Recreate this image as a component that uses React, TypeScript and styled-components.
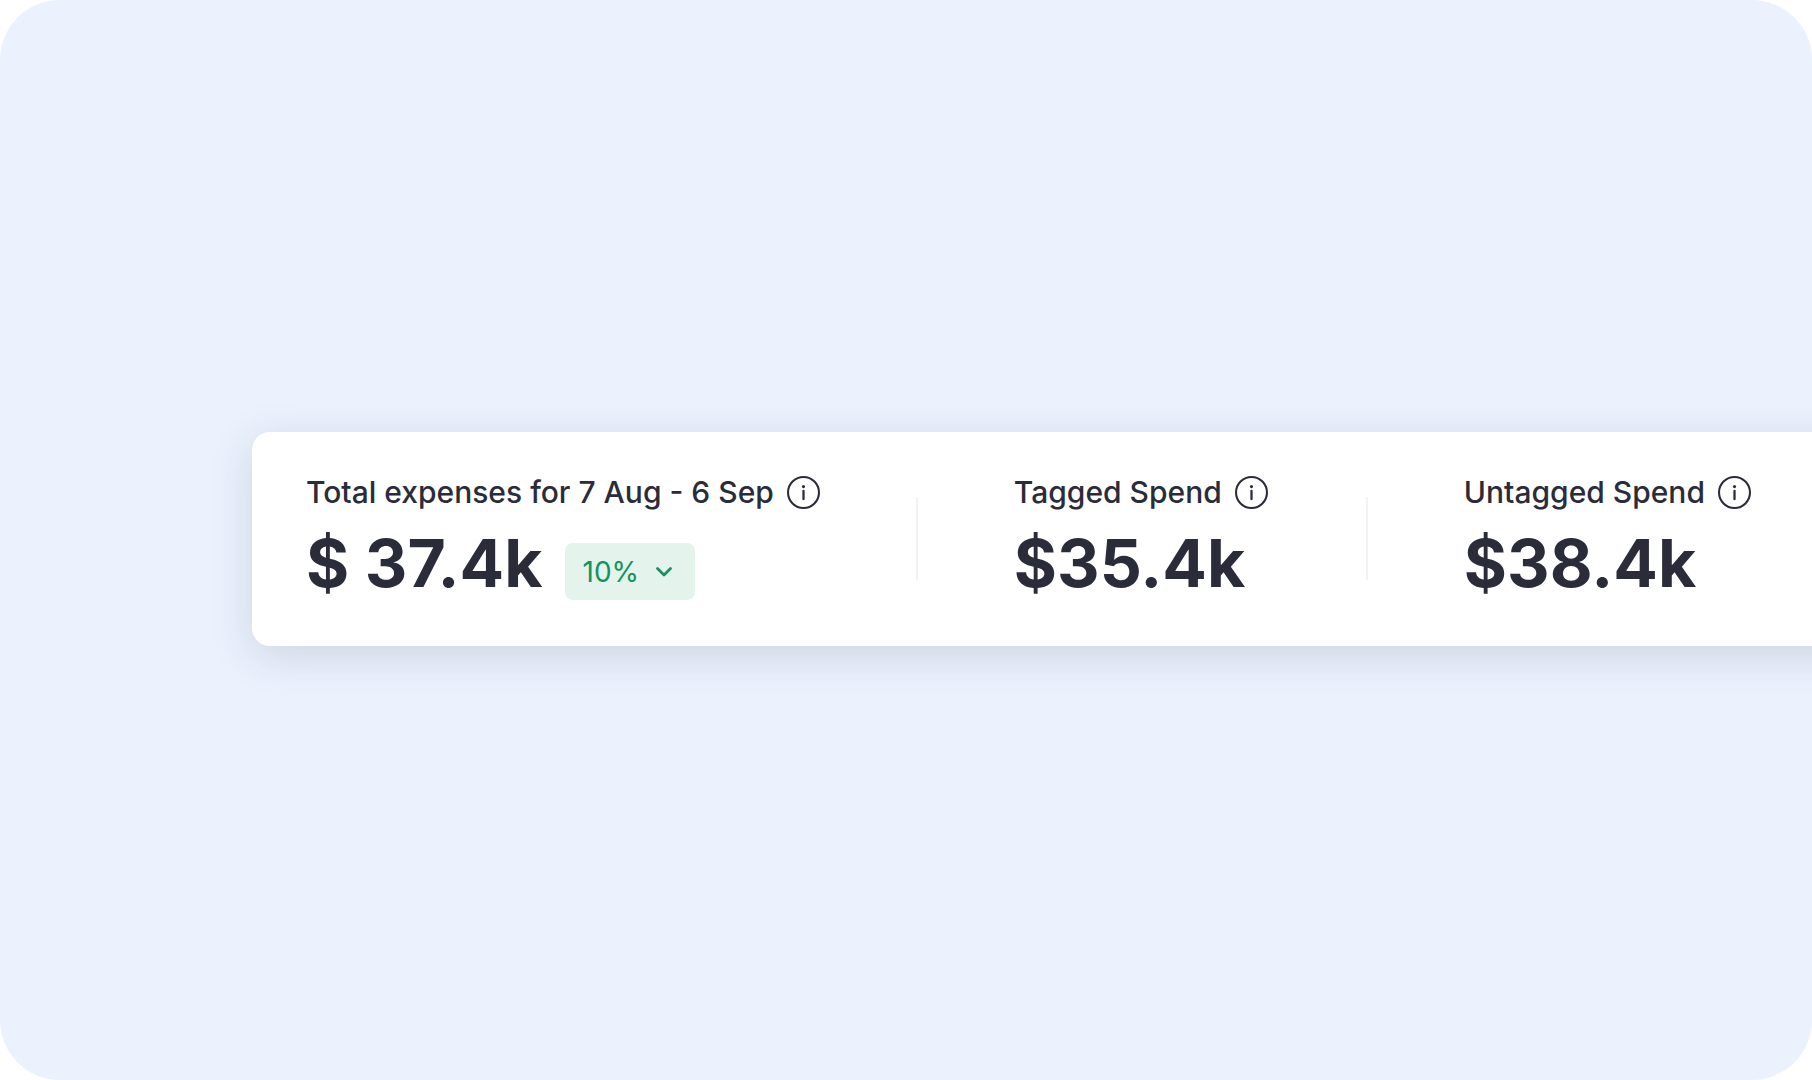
import React from "react";
import styled, { createGlobalStyle } from "styled-components";

const GlobalStyle = createGlobalStyle`
  *, *::before, *::after { box-sizing: border-box; }
  body {
    margin: 0;
    background: #ffffff;
    color: #2b2c3a;
    font-family: Inter, "Liberation Sans", sans-serif;
  }
`;

const Stage = styled.main`
  display: flex;
  align-items: center;
  min-height: 100vh;
  padding: 0 0 2px 252px;
  overflow: hidden;
  border-radius: 60px;
  background: #ebf2fe;
`;

const SummaryCard = styled.section`
  display: flex;
  flex: 1 0 auto;
  gap: 96px;
  margin-right: -80px;
  padding: 40px 54px 46px;
  border-radius: 18px;
  background: #ffffff;
  box-shadow: 0 10px 44px rgba(43, 44, 62, 0.15);
`;

const Metric = styled.div<{ $minWidth: number }>`
  display: flex;
  flex-direction: column;
  gap: 14px;
  min-width: ${({ $minWidth }) => $minWidth}px;
  white-space: nowrap;
`;

const MetricHeader = styled.div`
  display: flex;
  align-items: center;
  gap: 13px;
  height: 40px;
`;

const MetricLabel = styled.h2`
  margin: 0;
  font-size: 30px;
  font-weight: 500;
  line-height: 40px;
`;

const InfoButton = styled.button`
  display: flex;
  padding: 0;
  border: 0;
  background: none;
  color: inherit;
  cursor: pointer;
`;

const MetricRow = styled.div`
  display: flex;
  align-items: flex-end;
  gap: 22px;
`;

const MetricValue = styled.p`
  margin: 0;
  font-size: 66px;
  font-weight: 700;
  line-height: 74px;
`;

const ChangeButton = styled.button`
  display: flex;
  align-items: center;
  gap: 16px;
  height: 57px;
  padding: 0 22px 0 18px;
  border: 0;
  border-radius: 8px;
  background: #e4f3ec;
  color: #12935f;
  font: 400 28px/32px Inter, "Liberation Sans", sans-serif;
  cursor: pointer;
`;

const Divider = styled.div`
  flex: none;
  width: 2px;
  margin: 25px 0 20px;
  background: #f2f2f4;
`;

function InfoIcon() {
  return (
    <svg width="33" height="33" viewBox="0 0 32 32" fill="none" aria-hidden="true">
      <circle cx="16" cy="16" r="15" stroke="currentColor" strokeWidth="2" />
      <circle cx="16" cy="10.3" r="1.5" fill="currentColor" />
      <path d="M16 14.5V22.5" stroke="currentColor" strokeWidth="2.2" strokeLinecap="round" />
    </svg>
  );
}

function ChevronIcon() {
  return (
    <svg width="18" height="12" viewBox="0 0 18 12" fill="none" aria-hidden="true">
      <path d="M2.5 2.5L9 9L15.5 2.5" stroke="currentColor" strokeWidth="2.8" strokeLinecap="round" strokeLinejoin="round" />
    </svg>
  );
}

type MetricItem = { label: string; value: string; minWidth: number; change?: string };

const metrics: MetricItem[] = [
  { label: "Total expenses for 7 Aug - 6 Sep", value: "$ 37.4k", minWidth: 512, change: "10%" },
  { label: "Tagged Spend", value: "$35.4k", minWidth: 256 },
  { label: "Untagged Spend", value: "$38.4k", minWidth: 256 },
];

export default function App() {
  return (
    <>
      <GlobalStyle />
      <Stage>
        <SummaryCard>
          {metrics.map((metric, index) => (
            <React.Fragment key={metric.label}>
              {index > 0 && <Divider />}
              <Metric $minWidth={metric.minWidth}>
                <MetricHeader>
                  <MetricLabel>{metric.label}</MetricLabel>
                  <InfoButton type="button" aria-label={`About ${metric.label}`}>
                    <InfoIcon />
                  </InfoButton>
                </MetricHeader>
                <MetricRow>
                  <MetricValue>{metric.value}</MetricValue>
                  {metric.change && (
                    <ChangeButton type="button">
                      {metric.change}
                      <ChevronIcon />
                    </ChangeButton>
                  )}
                </MetricRow>
              </Metric>
            </React.Fragment>
          ))}
        </SummaryCard>
      </Stage>
    </>
  );
}
